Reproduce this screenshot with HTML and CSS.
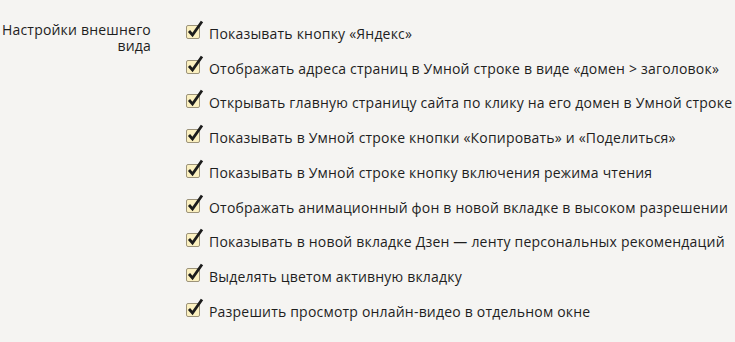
FILE: index.html
```
<!DOCTYPE html>
<html lang="ru">
  <head>
    <meta charset="UTF-8" />
    <title>Настройки</title>
    <link rel="stylesheet" href="styles.css">
  </head>
  <body>
    <main class="settings">
      <div class="section-title">Настройки внешнего вида</div>
      <div class="options">
        <label class="option"><span class="check"></span>Показывать кнопку «Яндекс»</label>
        <label class="option"><span class="check"></span>Отображать адреса страниц в Умной строке в виде «домен &gt; заголовок»</label>
        <label class="option"><span class="check"></span>Открывать главную страницу сайта по клику на его домен в Умной строке</label>
        <label class="option"><span class="check"></span>Показывать в Умной строке кнопки «Копировать» и «Поделиться»</label>
        <label class="option"><span class="check"></span>Показывать в Умной строке кнопку включения режима чтения</label>
        <label class="option"><span class="check"></span>Отображать анимационный фон в новой вкладке в высоком разрешении</label>
        <label class="option"><span class="check"></span>Показывать в новой вкладке Дзен — ленту персональных рекомендаций</label>
        <label class="option"><span class="check"></span>Выделять цветом активную вкладку</label>
        <label class="option"><span class="check"></span>Разрешить просмотр онлайн-видео в отдельном окне</label>
      </div>
    </main>
    <script>
      // same checkbox drawing for every row
      var mark = '<svg width="20" height="21" viewBox="0 0 20 21">' +
        '<rect x="0.5" y="5.5" width="13" height="13" rx="1.5" fill="#fbf0c0" stroke="#9c937a"/>' +
        '<path d="M3 11 L6.5 15 L16 1.5" fill="none" stroke="#1c1c1c" stroke-width="2.8"/>' +
        '</svg>';
      document.querySelectorAll(".check").forEach(function (el) {
        el.innerHTML = mark;
      });
    </script>
  </body>
</html>
```

FILE: styles.css
```
body {
  margin: 0;
  background: #f5f4f2;
  color: #1e1e1e;
  font-family: "Open Sans", "DejaVu Sans", sans-serif;
  font-size: 14px;
  letter-spacing: 0.2px;
}
.settings {
  display: grid;
  grid-template-columns: 151px 1fr;
  column-gap: 35px;
}
.section-title {
  text-align: right;
  line-height: 16px;
  padding-top: 22px;
}
.options {
  padding-top: 16px;
}
.option {
  display: flex;
  align-items: center;
  height: 34.75px;
  white-space: nowrap;
}
.check {
  display: inline-block;
  width: 20px;
  height: 21px;
  margin-right: 3px;
  margin-top: -6px;
}
.check svg {
  display: block;
}
```
